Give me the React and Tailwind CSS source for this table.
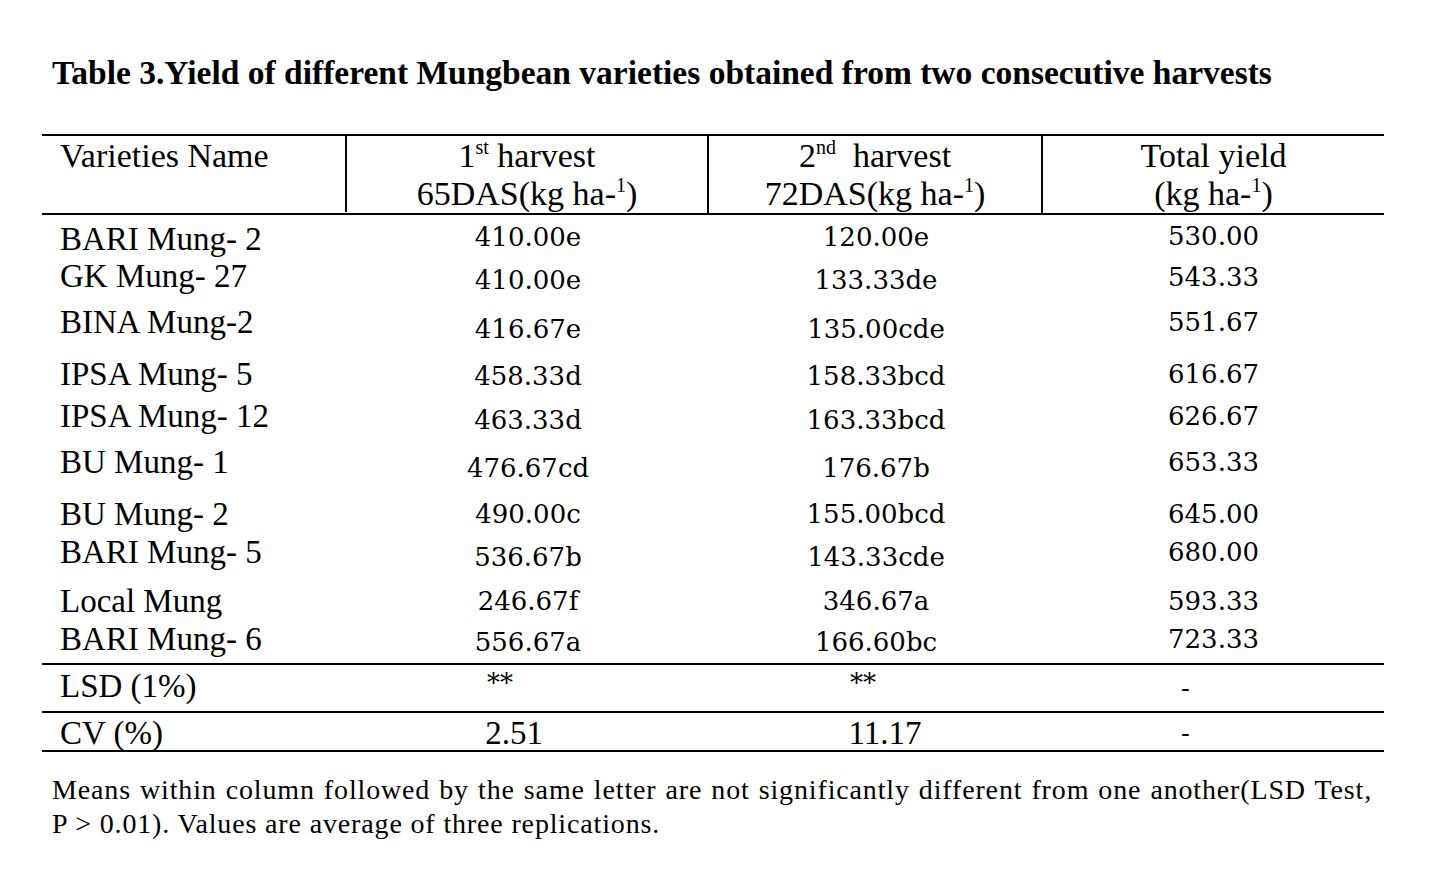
import React from "react";

const TIMES = "font-['Liberation_Serif','Times_New_Roman',serif]";
const DV = "font-['DejaVu_Serif',serif]";

const rows = [
  { name: "BARI Mung- 2", a: "410.00e", b: "120.00e", t: "530.00", h: "h-[40px]", pn: "pt-[5px]", pv: "pt-[7px]", pt: "pt-[6px]" },
  { name: "GK Mung- 27", a: "410.00e", b: "133.33de", t: "543.33", h: "h-[45px]", pn: "pt-[2px]", pv: "pt-[10px]", pt: "pt-[7px]" },
  { name: "BINA Mung-2", a: "416.67e", b: "135.00cde", t: "551.67", h: "h-[51px]", pn: "pt-[3px]", pv: "pt-[14px]", pt: "pt-[7px]" },
  { name: "IPSA Mung- 5", a: "458.33d", b: "158.33bcd", t: "616.67", h: "h-[43px]", pn: "pt-[4px]", pv: "pt-[10px]", pt: "pt-[8px]" },
  { name: "IPSA Mung- 12", a: "463.33d", b: "163.33bcd", t: "626.67", h: "h-[45px]", pn: "pt-[3px]", pv: "pt-[11px]", pt: "pt-[7px]" },
  { name: "BU Mung- 1", a: "476.67cd", b: "176.67b", t: "653.33", h: "h-[50px]", pn: "pt-[4px]", pv: "pt-[14px]", pt: "pt-[8px]" },
  { name: "BU Mung- 2", a: "490.00c", b: "155.00bcd", t: "645.00", h: "h-[41px]", pn: "pt-[6px]", pv: "pt-[10px]", pt: "pt-[10px]" },
  { name: "BARI Mung- 5", a: "536.67b", b: "143.33cde", t: "680.00", h: "h-[49px]", pn: "pt-[3px]", pv: "pt-[12px]", pt: "pt-[7px]" },
  { name: "Local Mung", a: "246.67f", b: "346.67a", t: "593.33", h: "h-[38px]", pn: "pt-[3px]", pv: "pt-[7px]", pt: "pt-[7px]" },
  { name: "BARI Mung- 6", a: "556.67a", b: "166.60bc", t: "723.33", h: "h-[46px]", pn: "pt-[3px]", pv: "pt-[10px]", pt: "pt-[7px]" },
];

const cols = "grid grid-cols-[305px_362px_334px_341px]";

function Sup({ children }) {
  return <sup className="text-[20px] -top-[13px]">{children}</sup>;
}

export default function App() {
  return (
    <div className={`w-[1439px] h-[882px] bg-white text-black ${TIMES}`}>
      <div className="pt-[54px] pl-[52px]">
        <h1 className="text-[33.5px] leading-[38px] font-bold whitespace-nowrap">
          Table 3.Yield of different Mungbean varieties obtained from two consecutive harvests
        </h1>
      </div>

      <div className="ml-[42px] mt-[42px] w-[1342px]">
        {/* header */}
        <div className={`${cols} border-t-2 border-b-2 border-black text-[34px] leading-[38px]`}>
          <div className="border-r-2 border-black pl-[18px] h-[76px] pt-[1px]">Varieties Name</div>
          <div className="border-r-2 border-black text-center pt-[1px]">
            <div>
              1<Sup>st</Sup> harvest
            </div>
            <div>
              65DAS(kg ha-<Sup>1</Sup>)
            </div>
          </div>
          <div className="border-r-2 border-black text-center pt-[1px]">
            <div>
              2<Sup>nd</Sup>&nbsp; harvest
            </div>
            <div>
              72DAS(kg ha-<Sup>1</Sup>)
            </div>
          </div>
          <div className="text-center pt-[1px]">
            <div>Total yield</div>
            <div>
              (kg ha-<Sup>1</Sup>)
            </div>
          </div>
        </div>

        {/* body */}
        <div className="border-b-2 border-black">
          {rows.map((r) => (
            <div key={r.name} className={`${cols} ${r.h}`}>
              <div className={`${r.pn} pl-[18px] text-[33px] leading-[38px] whitespace-nowrap`}>{r.name}</div>
              <div className={`${r.pv} ${DV} text-center text-[26px] leading-[30px]`}>{r.a}</div>
              <div className={`${r.pv} ${DV} text-center text-[26px] leading-[30px]`}>{r.b}</div>
              <div className={`${r.pt} ${DV} text-center text-[26px] leading-[30px]`}>{r.t}</div>
            </div>
          ))}
        </div>

        <div className={`${cols} h-[48px] border-b-2 border-black`}>
          <div className="pt-[2px] pl-[18px] text-[33px] leading-[38px]">LSD (1%)</div>
          <div className={`pt-[3px] ${DV} text-center text-[26px] leading-[30px]`}>
            <span className="ml-[-56px]">**</span>
          </div>
          <div className={`pt-[3px] ${DV} text-center text-[26px] leading-[30px]`}>
            <span className="ml-[-26px]">**</span>
          </div>
          <div className={`pt-[8px] ${DV} text-center text-[26px] leading-[30px]`}>
            <span className="ml-[-56px]">-</span>
          </div>
        </div>

        <div className={`${cols} h-[39px] border-b-2 border-black`}>
          <div className="pt-[1px] pl-[18px] text-[33px] leading-[38px]">CV (%)</div>
          <div className="pt-[1px] text-center text-[33px] leading-[38px]">
            <span className="ml-[-28px]">2.51</span>
          </div>
          <div className="pt-[1px] text-center text-[33px] leading-[38px]">
            <span className="ml-[18px]">11.17</span>
          </div>
          <div className={`pt-[5px] ${DV} text-center text-[26px] leading-[30px]`}>
            <span className="ml-[-56px]">-</span>
          </div>
        </div>
      </div>

      <div className="ml-[52px] mt-[21px] w-[1320px] text-[28px] leading-[34px] tracking-[0.85px]">
        <p className="text-justify [text-align-last:justify]">
          Means within column followed by the same letter are not significantly different from one another(LSD Test,
        </p>
        <p>P &gt; 0.01). Values are average of three replications.</p>
      </div>
    </div>
  );
}
